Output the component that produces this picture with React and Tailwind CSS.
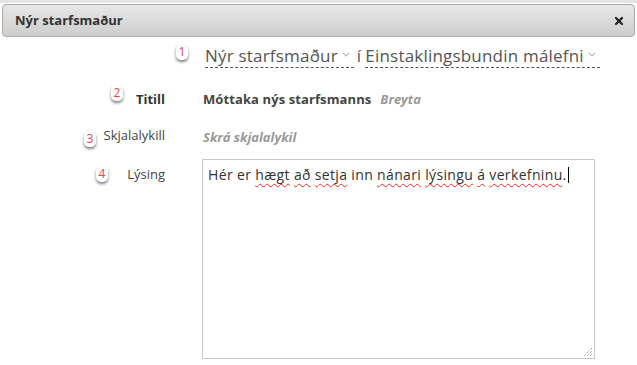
import { X } from 'lucide-react';

function Badge({ n, className = '' }) {
  return (
    <span
      className={`absolute inline-flex h-[16px] w-[12px] items-center justify-center rounded-[5px] bg-white text-[12px] leading-none text-[#e8414b] shadow-[0_2px_3px_rgba(0,0,0,0.5)] ${className}`}
    >
      {n}
    </span>
  );
}

function Chevron() {
  return (
    <svg width="8" height="5" viewBox="0 0 8 5" className="mx-[4px] mb-[10px] inline-block">
      <path d="M1 1 L4 4 L7 1" stroke="#bbb" strokeWidth="1.2" fill="none" />
    </svg>
  );
}

function Wavy({ children }) {
  return (
    <span className="underline decoration-wavy decoration-[#e0302c] decoration-[1px] underline-offset-[3px]">
      {children}
    </span>
  );
}

export default function App() {
  return (
    <div
      className="h-[365px] w-[637px] overflow-hidden bg-white"
      style={{ fontFamily: '"Open Sans", "Liberation Sans", sans-serif' }}
    >
      <div className="h-[3px] bg-[#e4e4e4]" />
      {/* Dialog header */}
      <div className="mx-[2px] mt-[1px] flex h-[33px] items-center justify-between rounded-[4px] border border-[#aaa] bg-gradient-to-b from-[#e8e8e8] to-[#cdcdcd] pl-[12px] pr-[9px]">
        <span className="text-[13px] font-bold text-[#333]">Nýr starfsmaður</span>
        <X size={12} strokeWidth={4.5} className="text-[#222]" />
      </div>

      <div className="relative mt-[6px]">
        {/* Row 1 */}
        <div className="relative flex h-[26px] items-center pl-[205px] text-[17px] tracking-[0.2px] text-[#555]">
          <Badge n="1" className="left-[176px] top-[1px]" />
          <span className="inline-flex items-end border-b border-dashed border-[#555] leading-[22px]">
            Nýr starfsmaður
            <Chevron />
          </span>
          <span className="ml-[3px] leading-[22px]">í</span>
          <span className="ml-[4px] inline-flex items-end border-b border-dashed border-[#555] leading-[22px]">
            Einstaklingsbundin málefni
            <Chevron />
          </span>
        </div>

        {/* Row 2 */}
        <div className="relative mt-[21px] flex items-center text-[13px]">
          <Badge n="2" className="left-[111px] -top-[5px]" />
          <span className="w-[165px] text-right font-bold text-[#333]">Titill</span>
          <span className="ml-[38px] font-bold tracking-[0.1px] text-[#444]">Móttaka nýs starfsmanns</span>
          <span className="ml-[9px] font-bold italic text-[#999]">Breyta</span>
        </div>

        {/* Row 3 */}
        <div className="relative mt-[18px] flex items-center text-[13px]">
          <Badge n="3" className="left-[84px] top-[3px]" />
          <span className="-mt-[3px] w-[165px] text-right text-[#444]">Skjalalykill</span>
          <span className="ml-[38px] font-bold italic text-[#999]">Skrá skjalalykil</span>
        </div>

        {/* Row 4 */}
        <div className="relative mt-[12px] flex items-start text-[13px]">
          <Badge n="4" className="left-[96px] top-[7px]" />
          <span className="mt-[6px] w-[165px] text-right text-[#444]">Lýsing</span>
          <div className="relative ml-[37px] h-[200px] w-[393px] border border-[#c8c8c8] bg-white px-[5px] py-[4px] text-[14px] tracking-[0.35px] text-[#333]">
            Hér er <Wavy>hægt</Wavy> <Wavy>að</Wavy> <Wavy>setja</Wavy> inn <Wavy>nánari</Wavy>{' '}
            <Wavy>lýsingu</Wavy> <Wavy>á</Wavy> <Wavy>verkefninu</Wavy>.
            <span className="ml-[1px] inline-block h-[16px] w-[1px] translate-y-[3px] bg-black" />
            <svg width="10" height="10" viewBox="0 0 10 10" className="absolute bottom-[1px] right-[1px]">
              <path d="M9 1 L1 9 M9 4 L4 9 M9 7 L7 9" stroke="#888" strokeWidth="1" strokeDasharray="1 1" />
            </svg>
          </div>
        </div>
      </div>
    </div>
  );
}
